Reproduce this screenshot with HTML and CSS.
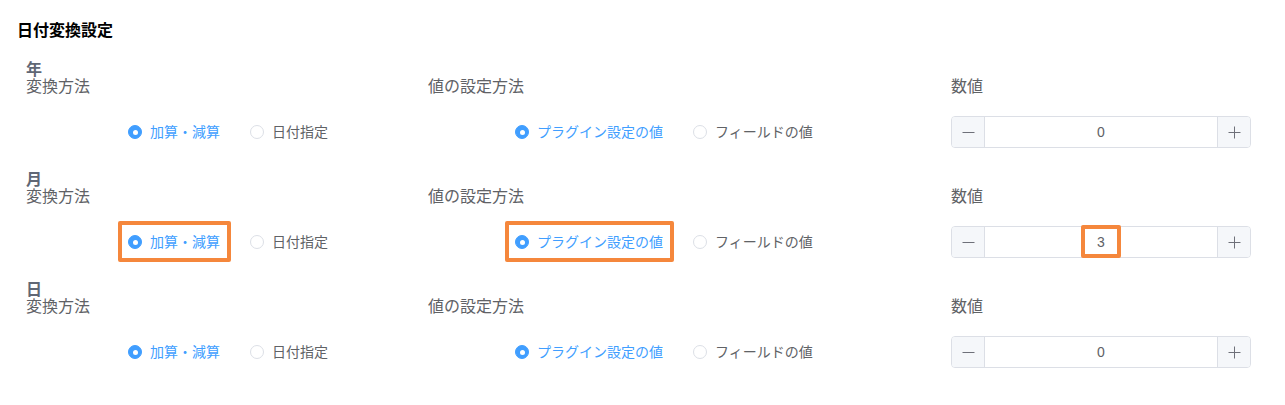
FILE: index.html
```html
<!DOCTYPE html>
<html lang="ja">
<head>
<meta charset="utf-8">
<title>日付変換設定</title>
<link rel="stylesheet" href="styles.css">
</head>
<body>
<div class="page">
  <h2 class="title">日付変換設定</h2>

  <section class="unit">
    <div class="unit-name">年</div>
    <div class="cols">
      <div class="col col1">
        <div class="label">変換方法</div>
        <div class="ctrl radios">
          <label class="radio checked"><span class="dot"></span><span class="txt">加算・減算</span></label>
          <label class="radio"><span class="dot"></span><span class="txt">日付指定</span></label>
        </div>
      </div>
      <div class="col col2">
        <div class="label">値の設定方法</div>
        <div class="ctrl radios">
          <label class="radio checked"><span class="dot"></span><span class="txt">プラグイン設定の値</span></label>
          <label class="radio"><span class="dot"></span><span class="txt">フィールドの値</span></label>
        </div>
      </div>
      <div class="col col3">
        <div class="label">数値</div>
        <div class="ctrl">
          <div class="num">
            <span class="btn minus"><svg width="13" height="13" viewBox="0 0 13 13"><path d="M0.5 6.5h12" stroke="#6e7079" stroke-width="1"/></svg></span>
            <span class="val">0</span>
            <span class="btn plus"><svg width="13" height="13" viewBox="0 0 13 13"><path d="M0.5 6.5h12M6.5 0.5v12" stroke="#6e7079" stroke-width="1"/></svg></span>
          </div>
        </div>
      </div>
    </div>
  </section>

  <section class="unit">
    <div class="unit-name">月</div>
    <div class="cols">
      <div class="col col1">
        <div class="label">変換方法</div>
        <div class="ctrl radios">
          <label class="radio checked hl"><span class="dot"></span><span class="txt">加算・減算</span></label>
          <label class="radio"><span class="dot"></span><span class="txt">日付指定</span></label>
        </div>
      </div>
      <div class="col col2">
        <div class="label">値の設定方法</div>
        <div class="ctrl radios">
          <label class="radio checked hl"><span class="dot"></span><span class="txt">プラグイン設定の値</span></label>
          <label class="radio"><span class="dot"></span><span class="txt">フィールドの値</span></label>
        </div>
      </div>
      <div class="col col3">
        <div class="label">数値</div>
        <div class="ctrl">
          <div class="num">
            <span class="btn minus"><svg width="13" height="13" viewBox="0 0 13 13"><path d="M0.5 6.5h12" stroke="#6e7079" stroke-width="1"/></svg></span>
            <span class="val">3<span class="hl-num"></span></span>
            <span class="btn plus"><svg width="13" height="13" viewBox="0 0 13 13"><path d="M0.5 6.5h12M6.5 0.5v12" stroke="#6e7079" stroke-width="1"/></svg></span>
          </div>
        </div>
      </div>
    </div>
  </section>

  <section class="unit">
    <div class="unit-name">日</div>
    <div class="cols">
      <div class="col col1">
        <div class="label">変換方法</div>
        <div class="ctrl radios">
          <label class="radio checked"><span class="dot"></span><span class="txt">加算・減算</span></label>
          <label class="radio"><span class="dot"></span><span class="txt">日付指定</span></label>
        </div>
      </div>
      <div class="col col2">
        <div class="label">値の設定方法</div>
        <div class="ctrl radios">
          <label class="radio checked"><span class="dot"></span><span class="txt">プラグイン設定の値</span></label>
          <label class="radio"><span class="dot"></span><span class="txt">フィールドの値</span></label>
        </div>
      </div>
      <div class="col col3">
        <div class="label">数値</div>
        <div class="ctrl">
          <div class="num">
            <span class="btn minus"><svg width="13" height="13" viewBox="0 0 13 13"><path d="M0.5 6.5h12" stroke="#6e7079" stroke-width="1"/></svg></span>
            <span class="val">0</span>
            <span class="btn plus"><svg width="13" height="13" viewBox="0 0 13 13"><path d="M0.5 6.5h12M6.5 0.5v12" stroke="#6e7079" stroke-width="1"/></svg></span>
          </div>
        </div>
      </div>
    </div>
  </section>
</div>
</body>
</html>
```

FILE: styles.css
```css
* { box-sizing: border-box; }
html, body {
  margin: 0;
  padding: 0;
  background: #ffffff;
}
body {
  font-family: "Helvetica Neue", Helvetica, "Liberation Sans", "Noto Sans CJK JP", sans-serif;
  font-size: 14px;
  color: #606266;
}
.page {
  padding: 21px 0 0 0;
}
.title {
  margin: 0 0 21px 17px;
  font-size: 16px;
  line-height: 20px;
  font-weight: bold;
  color: #000000;
}
.unit {
  padding-left: 26px;
  margin-bottom: 24px;
}
.unit-name {
  font-size: 16px;
  font-weight: bold;
  line-height: 16px;
  height: 16px;
  color: #606775;
}
.cols {
  display: flex;
}
.col1 { width: 402px; }
.col2 { width: 523px; }
.col3 { width: 300px; }
.label {
  font-size: 16px;
  line-height: 18px;
  height: 18px;
  color: #606266;
}
.ctrl {
  margin-top: 20px;
  height: 32px;
  display: flex;
  align-items: center;
}
.col1 .radios { padding-left: 102px; }
.col2 .radios { padding-left: 87px; }
.radio {
  position: relative;
  display: inline-flex;
  align-items: center;
  line-height: 20px;
  margin-right: 30px;
  color: #606266;
  white-space: nowrap;
}
.radio .dot {
  width: 14px;
  height: 14px;
  border-radius: 50%;
  border: 1px solid #dcdfe6;
  background: #ffffff;
  margin-right: 8px;
  position: relative;
  flex: none;
}
.radio.checked { color: #409eff; }
.radio.checked .dot {
  border-color: #409eff;
  background: #409eff;
}
.radio.checked .dot::after {
  content: "";
  position: absolute;
  left: 50%;
  top: 50%;
  width: 5px;
  height: 5px;
  margin: -2.5px 0 0 -2.5px;
  border-radius: 50%;
  background: #ffffff;
}
.hl::after {
  content: "";
  position: absolute;
  left: -10px;
  right: -11px;
  top: -11px;
  bottom: -10px;
  border: 4px solid #f5873c;
  border-radius: 2px;
}
.num {
  display: flex;
  width: 300px;
  height: 32px;
  border: 1px solid #dcdfe6;
  border-radius: 4px;
}
.btn {
  width: 33px;
  flex: none;
  background: #f5f7fa;
  display: flex;
  align-items: center;
  justify-content: center;
}
.minus {
  border-right: 1px solid #dcdfe6;
  border-radius: 3px 0 0 3px;
}
.plus {
  border-left: 1px solid #dcdfe6;
  border-radius: 0 3px 3px 0;
}
.val {
  flex: 1;
  position: relative;
  text-align: center;
  line-height: 30px;
  color: #606266;
}
.hl-num {
  position: absolute;
  left: 50%;
  top: -2px;
  width: 40px;
  height: 33px;
  margin-left: -20px;
  border: 4px solid #f5873c;
  border-radius: 2px;
}
```
